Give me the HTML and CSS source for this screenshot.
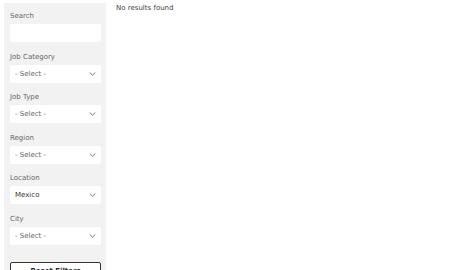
FILE: index.html
```
<!DOCTYPE html>
<html>
<head>
<meta charset="utf-8">
<link rel="stylesheet" href="styles.css">
</head>
<body>
<div class="page">
  <aside class="filters">
    <div class="group">
      <label class="label">Search</label>
      <div class="field"></div>
    </div>
    <div class="group">
      <label class="label">Job Category</label>
      <div class="field select"><span>- Select -</span><svg class="chev" viewBox="0 0 8 5" width="7" height="4"><path d="M0.5 0.7 L4 4 L7.5 0.7" fill="none" stroke="#555" stroke-width="1"/></svg></div>
    </div>
    <div class="group">
      <label class="label">Job Type</label>
      <div class="field select"><span>- Select -</span><svg class="chev" viewBox="0 0 8 5" width="7" height="4"><path d="M0.5 0.7 L4 4 L7.5 0.7" fill="none" stroke="#555" stroke-width="1"/></svg></div>
    </div>
    <div class="group">
      <label class="label">Region</label>
      <div class="field select"><span>- Select -</span><svg class="chev" viewBox="0 0 8 5" width="7" height="4"><path d="M0.5 0.7 L4 4 L7.5 0.7" fill="none" stroke="#555" stroke-width="1"/></svg></div>
    </div>
    <div class="group">
      <label class="label">Location</label>
      <div class="field select"><span class="val">Mexico</span><svg class="chev" viewBox="0 0 8 5" width="7" height="4"><path d="M0.5 0.7 L4 4 L7.5 0.7" fill="none" stroke="#555" stroke-width="1"/></svg></div>
    </div>
    <div class="group">
      <label class="label">City</label>
      <div class="field select"><span>- Select -</span><svg class="chev" viewBox="0 0 8 5" width="7" height="4"><path d="M0.5 0.7 L4 4 L7.5 0.7" fill="none" stroke="#555" stroke-width="1"/></svg></div>
    </div>
    <button class="reset">Reset Filters</button>
  </aside>
  <main class="results">No results found</main>
</div>
</body>
</html>
```
FILE: styles.css
```
html, body {
  margin: 0;
  padding: 0;
  background: #fff;
  font-family: "DejaVu Sans", sans-serif;
  overflow: hidden;
}
.page {
  display: flex;
  align-items: flex-start;
  padding: 3px 0 0 4px;
}
.filters {
  width: 102px;
  box-sizing: border-box;
  background: #f2f2f2;
  padding: 8px 5px 20px 6px;
  display: flex;
  flex-direction: column;
}
.group {
  display: flex;
  flex-direction: column;
  margin-bottom: 9.6px;
}
.label {
  font-size: 7px;
  line-height: 10px;
  color: #666;
  margin-bottom: 3px;
}
.field {
  height: 18px;
  background: #fff;
  border-radius: 2px;
  box-sizing: border-box;
}
.select {
  display: flex;
  align-items: center;
  justify-content: space-between;
  padding: 0 5px 0 5px;
  font-size: 7px;
  color: #666;
}
.select .val {
  color: #333;
}
.chev {
  display: block;
}
.reset {
  margin-top: 7px;
  height: 18px;
  background: #fff;
  border: 1.5px solid #333;
  border-radius: 2px;
  font-family: "DejaVu Sans", sans-serif;
  font-weight: bold;
  font-size: 7px;
  color: #222;
  padding: 0;
}
.results {
  padding: 0 0 0 10px;
  font-size: 7px;
  line-height: 10px;
  color: #444;
}
```
